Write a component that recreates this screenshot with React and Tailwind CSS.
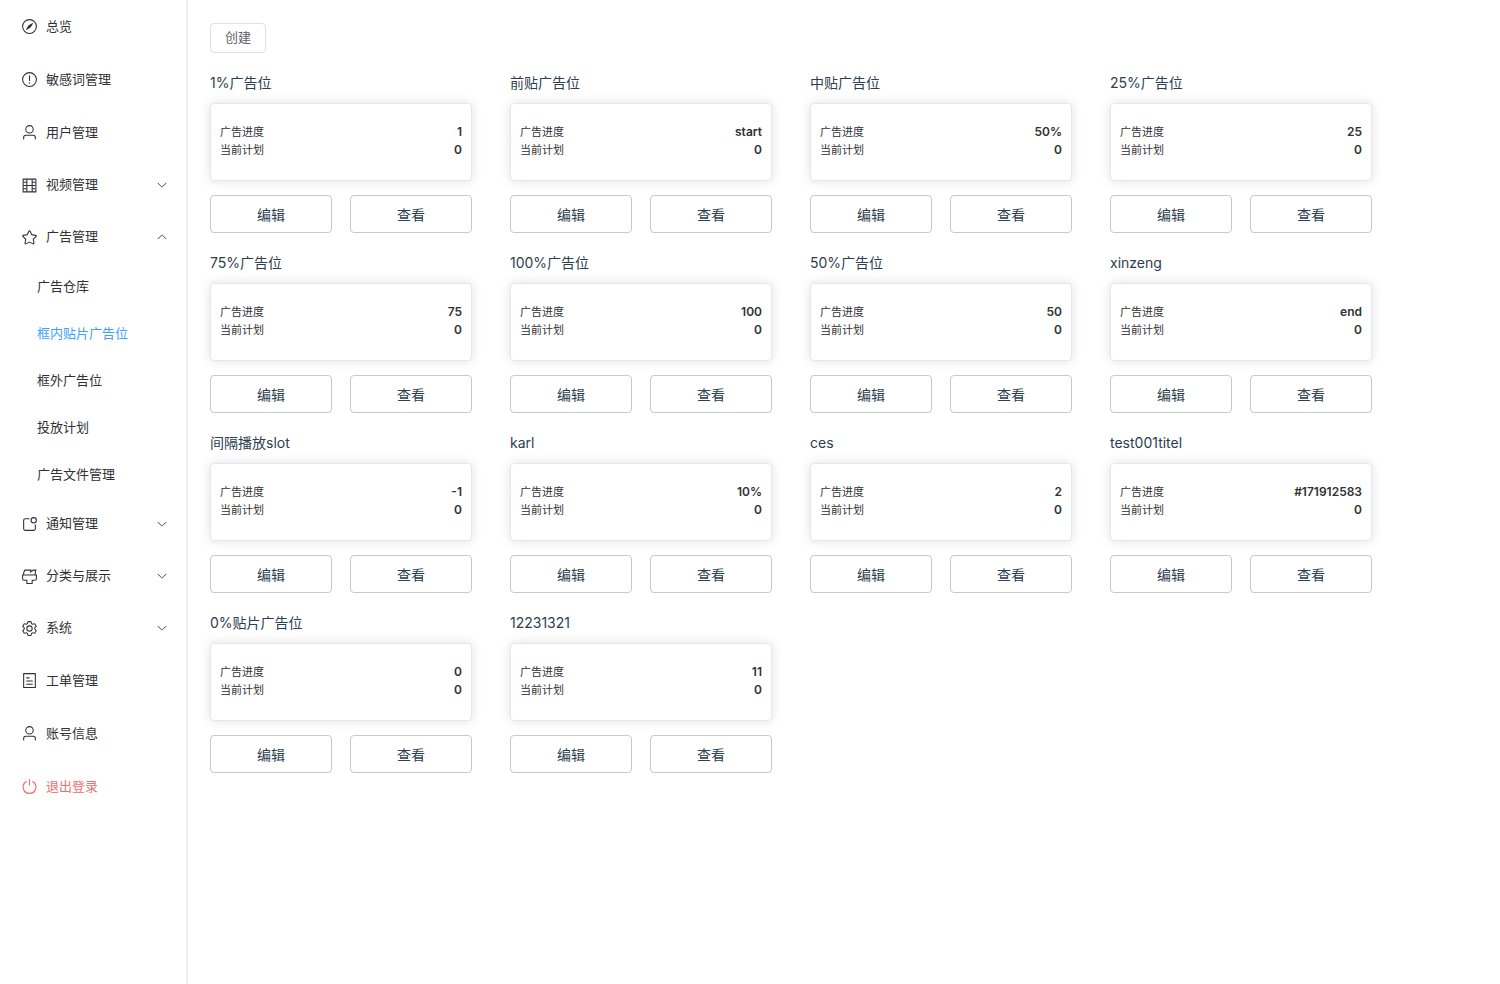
import { useState } from "react"

const ICONS = {
  compass: [
    "M512 896a384 384 0 1 0 0-768 384 384 0 0 0 0 768m0 64a448 448 0 1 1 0-896 448 448 0 0 1 0 896",
    "M725.888 315.008C676.48 428.672 624 513.28 568.576 568.64c-55.424 55.424-139.968 107.904-253.568 157.312a12.8 12.8 0 0 1-16.896-16.832c49.536-113.728 102.016-198.272 157.312-253.632 55.36-55.296 139.904-107.776 253.632-157.312a12.8 12.8 0 0 1 16.832 16.832",
  ],
  warning: [
    "M512 64a448 448 0 1 1 0 896 448 448 0 0 1 0-896m0 832a384 384 0 0 0 0-768 384 384 0 0 0 0 768m48-176a48 48 0 1 1-96 0 48 48 0 0 1 96 0m-48-464a32 32 0 0 1 32 32v288a32 32 0 0 1-64 0V288a32 32 0 0 1 32-32",
  ],
  user: [
    "M512 512a192 192 0 1 0 0-384 192 192 0 0 0 0 384m0 64a256 256 0 1 1 0-512 256 256 0 0 1 0 512m320 320v-96a96 96 0 0 0-96-96H288a96 96 0 0 0-96 96v96a32 32 0 1 1-64 0v-96a160 160 0 0 1 160-160h448a160 160 0 0 1 160 160v96a32 32 0 1 1-64 0",
  ],
  film: [
    "M160 160v704h704V160zm-32-64h768a32 32 0 0 1 32 32v768a32 32 0 0 1-32 32H128a32 32 0 0 1-32-32V128a32 32 0 0 1 32-32",
    "M320 288V128h64v352h256V128h64v160h160v64H704v128h160v64H704v128h160v64H704v160h-64V544H384v352h-64V736H128v-64h192V544H128v-64h192V352H128v-64z",
  ],
  star: [
    "m512 747.84 228.16 119.936a6.4 6.4 0 0 0 9.28-6.72l-43.52-254.08 184.512-179.904a6.4 6.4 0 0 0-3.52-10.88l-255.104-37.12L517.76 147.904a6.4 6.4 0 0 0-11.52 0L392.192 379.072l-255.104 37.12a6.4 6.4 0 0 0-3.52 10.88L318.08 606.976l-43.584 254.08a6.4 6.4 0 0 0 9.28 6.72zM313.6 924.48a70.4 70.4 0 0 1-102.144-74.24l37.888-220.928L88.96 472.96A70.4 70.4 0 0 1 128 352.896l221.76-32.256 99.2-200.96a70.4 70.4 0 0 1 126.208 0l99.2 200.96 221.824 32.256a70.4 70.4 0 0 1 39.04 120.064L774.72 629.376l37.888 220.928a70.4 70.4 0 0 1-102.144 74.24L512 820.096l-198.4 104.32z",
  ],
  notification: [
    "M512 128v64H256a64 64 0 0 0-64 64v512a64 64 0 0 0 64 64h512a64 64 0 0 0 64-64V512h64v256a128 128 0 0 1-128 128H256a128 128 0 0 1-128-128V256a128 128 0 0 1 128-128z",
    "M768 384a128 128 0 1 0 0-256 128 128 0 0 0 0 256m0 64a192 192 0 1 1 0-384 192 192 0 0 1 0 384",
  ],
  brush: [
    "M896 448H128v192a64 64 0 0 0 64 64h192v192h256V704h192a64 64 0 0 0 64-64zm-770.752-64c0-47.552 5.248-90.24 15.552-128 14.72-54.016 42.496-107.392 83.2-160h417.28l-15.36 70.336L736 96h211.2c-24.832 42.88-41.92 96.256-51.2 160a663.872 663.872 0 0 0-6.144 128H960v256a128 128 0 0 1-128 128H704v160a32 32 0 0 1-32 32H352a32 32 0 0 1-32-32V768H192A128 128 0 0 1 64 640V384h61.248zm64 0h636.544c-2.048-45.824.256-91.584 6.848-137.216 4.48-30.848 10.688-59.776 18.688-86.784h-96.64l-221.12 141.248L561.92 160H256.512c-25.856 37.888-43.776 75.456-53.952 112.832-8.768 32.064-13.248 69.12-13.312 111.168z",
  ],
  setting: [
    "M600.704 64a32 32 0 0 1 30.464 22.208l35.2 109.376c14.784 7.232 28.928 15.36 42.432 24.512l112.384-24.192a32 32 0 0 1 34.432 15.36L944.32 364.8a32 32 0 0 1-4.032 37.504l-77.12 85.12a357.12 357.12 0 0 1 0 49.024l77.12 85.248a32 32 0 0 1 4.032 37.504l-88.704 153.6a32 32 0 0 1-34.432 15.296L708.8 803.904c-13.44 9.088-27.648 17.28-42.368 24.512l-35.264 109.376A32 32 0 0 1 600.704 960H423.296a32 32 0 0 1-30.464-22.208L357.696 828.48a351.616 351.616 0 0 1-42.56-24.64l-112.32 24.256a32 32 0 0 1-34.432-15.36L79.68 659.2a32 32 0 0 1 4.032-37.504l77.12-85.248a357.12 357.12 0 0 1 0-48.896l-77.12-85.248A32 32 0 0 1 79.68 364.8l88.704-153.6a32 32 0 0 1 34.432-15.296l112.32 24.256c13.568-9.152 27.776-17.408 42.56-24.64l35.2-109.312A32 32 0 0 1 423.232 64H600.64zm-23.424 64H446.72l-36.352 113.088-24.512 11.968a294.113 294.113 0 0 0-34.816 20.096l-22.656 15.36-116.224-25.088-65.28 113.152 79.68 88.192-1.92 27.136a293.12 293.12 0 0 0 0 40.192l1.92 27.136-79.808 88.192 65.344 113.152 116.224-25.024 22.656 15.296a294.113 294.113 0 0 0 34.816 20.096l24.512 11.968L446.72 896h130.688l36.48-113.152 24.448-11.904a288.282 288.282 0 0 0 34.752-20.096l22.592-15.296 116.288 25.024 65.28-113.152-79.744-88.192 1.92-27.136a293.12 293.12 0 0 0 0-40.256l-1.92-27.136 79.808-88.128-65.344-113.152-116.288 24.96-22.592-15.232a287.616 287.616 0 0 0-34.752-20.096l-24.448-11.904L577.344 128zM512 320a192 192 0 1 1 0 384 192 192 0 0 1 0-384m0 64a128 128 0 1 0 0 256 128 128 0 0 0 0-256",
  ],
  tickets: [
    "M192 128v768h640V128zm-32-64h704a32 32 0 0 1 32 32v832a32 32 0 0 1-32 32H160a32 32 0 0 1-32-32V96a32 32 0 0 1 32-32m160 448h384v64H320zm0-192h192v64H320zm0 384h384v64H320z",
  ],
  power: [
    "M352 159.872V230.4a352 352 0 1 0 320 0v-70.528A416.128 416.128 0 0 1 512 960a416 416 0 0 1-160-800.128z",
    "M512 64q32 0 32 32v320q0 32-32 32t-32-32V96q0-32 32-32",
  ],
  arrow: [
    "M831.872 340.864 512 652.672 192.128 340.864a30.592 30.592 0 0 0-42.752 0 29.12 29.12 0 0 0 0 41.6L489.664 714.24a32 32 0 0 0 44.672 0l340.288-331.712a29.12 29.12 0 0 0 0-41.728 30.592 30.592 0 0 0-42.752 0z",
  ],
}

const MENU = [
  { label: "总览", icon: "compass" },
  { label: "敏感词管理", icon: "warning" },
  { label: "用户管理", icon: "user" },
  { label: "视频管理", icon: "film", children: [] },
  {
    label: "广告管理",
    icon: "star",
    children: ["广告仓库", "框内贴片广告位", "框外广告位", "投放计划", "广告文件管理"],
  },
  { label: "通知管理", icon: "notification", children: [] },
  { label: "分类与展示", icon: "brush", children: [] },
  { label: "系统", icon: "setting", children: [] },
  { label: "工单管理", icon: "tickets" },
  { label: "账号信息", icon: "user" },
  { label: "退出登录", icon: "power", danger: true },
]

const SLOTS = [
  { title: "1%广告位", progress: "1", plans: 0 },
  { title: "前贴广告位", progress: "start", plans: 0 },
  { title: "中贴广告位", progress: "50%", plans: 0 },
  { title: "25%广告位", progress: "25", plans: 0 },
  { title: "75%广告位", progress: "75", plans: 0 },
  { title: "100%广告位", progress: "100", plans: 0 },
  { title: "50%广告位", progress: "50", plans: 0 },
  { title: "xinzeng", progress: "end", plans: 0 },
  { title: "间隔播放slot", progress: "-1", plans: 0 },
  { title: "karl", progress: "10%", plans: 0 },
  { title: "ces", progress: "2", plans: 0 },
  { title: "test001titel", progress: "#171912583", plans: 0 },
  { title: "0%贴片广告位", progress: "0", plans: 0 },
  { title: "12231321", progress: "11", plans: 0 },
]

const Icon = ({ name, className }) => (
  <svg viewBox="0 0 1024 1024" fill="currentColor" aria-hidden="true" className={className}>
    {ICONS[name].map((d) => (
      <path key={d} d={d} />
    ))}
  </svg>
)

const Sidebar = () => {
  const [opened, setOpened] = useState("广告管理")
  const [active, setActive] = useState("框内贴片广告位")

  return (
    <aside className="w-[188px] shrink-0 border-r-2 border-[#eeeeee] text-[13px] text-[#303133]">
      <nav>
        <ul>
          {MENU.map((item) => {
            const isOpen = opened === item.label

            if (!item.children) {
              return (
                <li key={item.label}>
                  <a
                    href="#"
                    className={`flex h-[53px] items-center gap-2 pl-[21px] ${item.danger ? "text-[#f56c6c]" : ""}`}
                  >
                    <Icon name={item.icon} className="size-[17px]" />
                    {item.label}
                  </a>
                </li>
              )
            }

            return (
              <li key={item.label}>
                <button
                  type="button"
                  aria-expanded={isOpen}
                  onClick={() => setOpened(isOpen ? "" : item.label)}
                  className="flex h-[52px] w-full items-center gap-2 pl-[21px] pr-[18px]"
                >
                  <Icon name={item.icon} className="size-[17px]" />
                  {item.label}
                  <Icon name="arrow" className={`ml-auto size-3 ${isOpen ? "rotate-180" : ""}`} />
                </button>
                {isOpen && (
                  <ul>
                    {item.children.map((child) => (
                      <li key={child}>
                        <a
                          href="#"
                          onClick={() => setActive(child)}
                          className={`flex h-[47px] items-center pl-[37px] ${active === child ? "text-[#409eff]" : ""}`}
                        >
                          {child}
                        </a>
                      </li>
                    ))}
                  </ul>
                )}
              </li>
            )
          })}
        </ul>
      </nav>
    </aside>
  )
}

const SlotCard = ({ slot }) => (
  <section className="w-[262px]">
    <h2 className="text-sm leading-5 text-[#2c3e50]">{slot.title}</h2>

    <dl className="mt-[10px] rounded border border-[#e4e7ed] bg-white px-[9px] pt-[19px] pb-[21px] text-[#303133] shadow-[0_0_11px_rgba(0,0,0,0.12)]">
      <div className="flex justify-between">
        <dt className="text-[11px] leading-[18px]">广告进度</dt>
        <dd className="text-[12px] leading-[18px] font-semibold">{slot.progress}</dd>
      </div>
      <div className="flex justify-between">
        <dt className="text-[11px] leading-[18px]">当前计划</dt>
        <dd className="text-[12px] leading-[18px] font-semibold">{slot.plans}</dd>
      </div>
    </dl>

    <div className="mt-[14px] flex gap-[18px] text-sm text-[#2c3e50]">
      <button type="button" className="h-[38px] flex-1 rounded border border-[#c8c9cc] pt-0.5">
        编辑
      </button>
      <button type="button" className="h-[38px] flex-1 rounded border border-[#c8c9cc] pt-0.5">
        查看
      </button>
    </div>
  </section>
)

const App = () => {
  return (
    <div className="flex min-h-screen bg-white font-['Inter','Noto_Sans_CJK_SC',sans-serif]">
      <Sidebar />
      <main className="flex-1 px-[22px] py-[23px]">
        <button
          type="button"
          className="h-[30px] rounded border border-[#dcdfe6] px-[14px] text-[13px] text-[#606266]"
        >
          创建
        </button>

        <div className="mt-5 flex flex-wrap gap-x-[38px] gap-y-5">
          {SLOTS.map((slot) => (
            <SlotCard key={slot.title} slot={slot} />
          ))}
        </div>
      </main>
    </div>
  )
}

export default App
